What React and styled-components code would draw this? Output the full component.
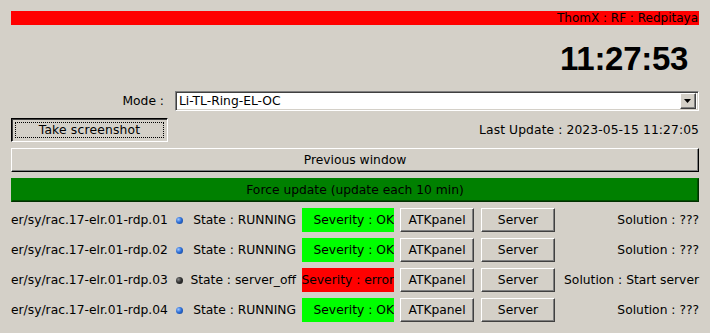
import React from "react";
import styled, { createGlobalStyle } from "styled-components";

const devices = [
  { name: "er/sy/rac.17-elr.01-rdp.01", on: true, state: "RUNNING", severity: "OK", solution: "???" },
  { name: "er/sy/rac.17-elr.01-rdp.02", on: true, state: "RUNNING", severity: "OK", solution: "???" },
  { name: "er/sy/rac.17-elr.01-rdp.03", on: false, state: "server_off", severity: "error", solution: "Start server" },
  { name: "er/sy/rac.17-elr.01-rdp.04", on: true, state: "RUNNING", severity: "OK", solution: "???" },
];

const App = () => {
  return (
    <Page>
      <Global />
      <TitleBar>ThomX : RF : Redpitaya</TitleBar>
      <Clock>11:27:53</Clock>
      <ModeRow>
        <ModeLabel>Mode :</ModeLabel>
        <Combo>
          <ComboText>Li-TL-Ring-EL-OC</ComboText>
          <ComboArrow>
            <svg width="8" height="5" viewBox="0 0 8 5">
              <path d="M0 0 H7 L3.5 4 Z" fill="#000" />
            </svg>
          </ComboArrow>
        </Combo>
      </ModeRow>
      <ShotRow>
        <ShotButton>Take screenshot</ShotButton>
        <LastUpdate>Last Update : 2023-05-15 11:27:05</LastUpdate>
      </ShotRow>
      <WideButton>Previous window</WideButton>
      <WideButton green>Force update (update each 10 min)</WideButton>
      <Rows>
        {devices.map((d) => (
          <Row key={d.name}>
            <DevName>{d.name}</DevName>
            <Led on={d.on} />
            <StateText>State : {d.state}</StateText>
            <Severity ok={d.severity === "OK"}>Severity : {d.severity}</Severity>
            <SmallButton>ATKpanel</SmallButton>
            <SmallButton>Server</SmallButton>
            <Solution>Solution : {d.solution}</Solution>
          </Row>
        ))}
      </Rows>
    </Page>
  );
};

export default App;

const Global = createGlobalStyle`
body {
  margin: 0;
  background: #d4d0c8;
}
`;

const Page = styled.div`
width: 710px;
height: 333px;
box-sizing: border-box;
padding: 11px 11px 0 11px;
background: #d4d0c8;
font-family: "DejaVu Sans", sans-serif;
font-size: 12.3px;
color: #000;
display: flex;
flex-direction: column;
`;

const TitleBar = styled.div`
height: 14px;
line-height: 14px;
font-size: 12px;
background: #ff0000;
text-align: right;
padding-right: 1px;
`;

const Clock = styled.div`
margin-top: 15px;
height: 38px;
line-height: 38px;
text-align: right;
padding-right: 11px;
font-family: "Liberation Sans", Arial, sans-serif;
font-weight: bold;
font-size: 33px;
letter-spacing: -0.3px;
`;

const ModeRow = styled.div`
margin-top: 13px;
display: flex;
align-items: center;
height: 20px;
`;

const ModeLabel = styled.div`
width: 153px;
text-align: right;
padding-right: 11px;
`;

const Combo = styled.div`
flex: 1;
height: 20px;
box-sizing: border-box;
background: #fff;
border: 1px solid;
border-color: #808080 #fff #fff #808080;
box-shadow: inset 1px 1px 0 #404040, inset -1px -1px 0 #d4d0c8;
display: flex;
align-items: center;
padding: 0 2px 0 3px;
`;

const ComboText = styled.div`
flex: 1;
`;

const ComboArrow = styled.div`
width: 16px;
height: 16px;
box-sizing: border-box;
background: #d4d0c8;
border: 1px solid;
border-color: #fff #404040 #404040 #fff;
box-shadow: inset -1px -1px 0 #808080;
display: flex;
align-items: center;
justify-content: center;
`;

const ShotRow = styled.div`
margin-top: 7px;
display: flex;
align-items: center;
justify-content: space-between;
height: 24px;
`;

const ShotButton = styled.div`
width: 157px;
height: 24px;
box-sizing: border-box;
border: 1px solid;
border-color: #000 #fff #fff #000;
box-shadow: inset 1px 1px 0 #404040;
outline: 1px dotted #000;
outline-offset: -5px;
display: flex;
align-items: center;
justify-content: center;
letter-spacing: 0.2px;
`;

const LastUpdate = styled.div`
letter-spacing: 0.1px;
`;

const WideButton = styled.div`
margin-top: 6px;
height: 24px;
box-sizing: border-box;
background: ${({ green }) => (green ? "#008000" : "#d4d0c8")};
border: 1px solid;
border-color: ${({ green }) =>
  green ? "#008000 #003000 #003000 #008000" : "#fff #000 #000 #fff"};
box-shadow: inset -1px -1px 0 ${({ green }) => (green ? "#005000" : "#808080")};
display: flex;
align-items: center;
justify-content: center;
`;

const Rows = styled.div`
margin-top: 6px;
display: flex;
flex-direction: column;
gap: 6px;
`;

const Row = styled.div`
display: flex;
align-items: center;
height: 24px;
`;

const DevName = styled.div`
width: 165px;
white-space: nowrap;
`;

const Led = styled.div`
width: 7px;
height: 7px;
border-radius: 50%;
background: ${({ on }) =>
  on
    ? "radial-gradient(circle at 35% 35%, #9cc4ff 0%, #2f6fd6 45%, #0b3a8c 100%)"
    : "radial-gradient(circle at 35% 35%, #888 0%, #333 45%, #111 100%)"};
`;

const StateText = styled.div`
width: 113px;
text-align: right;
white-space: nowrap;
`;

const Severity = styled.div`
margin-left: 6px;
width: 92px;
height: 24px;
line-height: 24px;
background: ${({ ok }) => (ok ? "#00ff00" : "#ff0000")};
text-align: right;
white-space: nowrap;
overflow: hidden;
direction: rtl;
`;

const SmallButton = styled.div`
margin-left: 6px;
width: 74px;
height: 24px;
box-sizing: border-box;
border: 1px solid;
border-color: #fff #404040 #404040 #fff;
box-shadow: inset -1px -1px 0 #808080;
display: flex;
align-items: center;
justify-content: center;
& + & {
  margin-left: 7px;
}
`;

const Solution = styled.div`
flex: 1;
text-align: right;
white-space: nowrap;
`;
